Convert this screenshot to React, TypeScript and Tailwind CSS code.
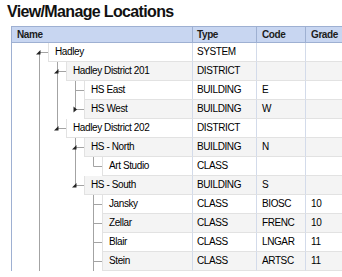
import React from 'react';

type Row = {
  name: string;
  type: string;
  code: string;
  grade: string;
  level: number;
  // full-height guide lines for ancestor levels
  anc: boolean[];
  // own guide line: full = has next sibling, half = last child, lower = root
  self: 'full' | 'half' | 'lower';
  exp: 'open' | 'closed' | null;
};

const rows: Row[] = [
  { name: 'Hadley', type: 'SYSTEM', code: '', grade: '', level: 0, anc: [], self: 'lower', exp: 'open' },
  { name: 'Hadley District 201', type: 'DISTRICT', code: '', grade: '', level: 1, anc: [true], self: 'full', exp: 'open' },
  { name: 'HS East', type: 'BUILDING', code: 'E', grade: '', level: 2, anc: [true, true], self: 'full', exp: null },
  { name: 'HS West', type: 'BUILDING', code: 'W', grade: '', level: 2, anc: [true, true], self: 'half', exp: 'closed' },
  { name: 'Hadley District 202', type: 'DISTRICT', code: '', grade: '', level: 1, anc: [true], self: 'half', exp: 'open' },
  { name: 'HS - North', type: 'BUILDING', code: 'N', grade: '', level: 2, anc: [true, false], self: 'full', exp: 'open' },
  { name: 'Art Studio', type: 'CLASS', code: '', grade: '', level: 3, anc: [true, false, true], self: 'half', exp: null },
  { name: 'HS - South', type: 'BUILDING', code: 'S', grade: '', level: 2, anc: [true, false], self: 'half', exp: 'open' },
  { name: 'Jansky', type: 'CLASS', code: 'BIOSC', grade: '10', level: 3, anc: [true, false, false], self: 'full', exp: null },
  { name: 'Zellar', type: 'CLASS', code: 'FRENC', grade: '10', level: 3, anc: [true, false, false], self: 'full', exp: null },
  { name: 'Blair', type: 'CLASS', code: 'LNGAR', grade: '11', level: 3, anc: [true, false, false], self: 'full', exp: null },
  { name: 'Stein', type: 'CLASS', code: 'ARTSC', grade: '11', level: 3, anc: [true, false, false], self: 'full', exp: null },
];

const INDENT = 18;
const H = 19;
const LINE = '#a3a3a3';

// tree guides drawn left of the label cell
const Guides: React.FC<{ row: Row }> = ({ row }) => {
  const w = 36 + INDENT * row.level;
  const lx = (k: number) => 27.5 + INDENT * k;
  const x = lx(row.level);
  const mid = 9.5;
  return (
    <svg width={w} height={H} className="shrink-0 block">
      {row.anc.map((on, k) =>
        on ? <line key={k} x1={lx(k)} y1={0} x2={lx(k)} y2={H} stroke={LINE} strokeWidth={1} /> : null
      )}
      {row.self === 'full' && <line x1={x} y1={0} x2={x} y2={H} stroke={LINE} />}
      {row.self === 'half' && <line x1={x} y1={0} x2={x} y2={mid} stroke={LINE} />}
      {row.self === 'lower' && <line x1={x} y1={mid} x2={x} y2={H} stroke={LINE} />}
      <line x1={x} y1={mid} x2={w} y2={mid} stroke={LINE} />
      {row.exp === 'open' && (
        <polygon points={`${x + 1},7 ${x + 1},11.5 ${x - 3.5},11.5`} fill="#222" />
      )}
      {row.exp === 'closed' && (
        <polygon points={`${x - 2},6.5 ${x - 2},12.5 ${x + 1.5},9.5`} fill="#222" />
      )}
    </svg>
  );
};

export default function App() {
  return (
    <div className="w-[342px] h-[277px] overflow-hidden bg-white font-['Liberation_Sans',Arial,sans-serif] text-black">
      <h1 className="h-[26px] pl-[7px] pt-[2px] text-[16px] leading-[19px] tracking-[-0.65px] font-bold text-[#111]">
        View/Manage Locations
      </h1>
      <div className="ml-[11px] w-[360px] border-l border-[#9eb0d2]">
        {/* header */}
        <div className="flex h-[17px] bg-[#c8d6f1] border-y border-[#9eb0d2] text-[10px] tracking-[-0.4px] font-bold text-[#1c1c1c] leading-[15px]">
          <div className="w-[180px] pl-[5px]">Name</div>
          <div className="w-[64px] border-l border-[#9eb0d2] pl-[4px]">Type</div>
          <div className="w-[49px] border-l border-[#9eb0d2] pl-[5px]">Code</div>
          <div className="flex-1 border-l border-[#9eb0d2] pl-[5px]">Grade</div>
        </div>
        {rows.map((r, i) => {
          const bg = i % 2 === 1 ? 'bg-[#f4f4f4]' : 'bg-white';
          return (
            <div key={i} className="flex h-[19px] text-[10px] tracking-[-0.4px] leading-[18px]">
              <div className="flex w-[180px]">
                <Guides row={r} />
                <div className={`flex-1 border-l border-b border-[#e2e2e2] pl-[6px] ${bg}`}>{r.name}</div>
              </div>
              <div className={`w-[64px] border-l border-b border-l-[#d3dbea] border-b-[#e2e2e2] pl-[4px] ${bg}`}>{r.type}</div>
              <div className={`w-[49px] border-l border-b border-l-[#d3dbea] border-b-[#e2e2e2] pl-[5px] ${bg}`}>{r.code}</div>
              <div className={`flex-1 border-l border-b border-l-[#d3dbea] border-b-[#e2e2e2] pl-[5px] ${bg}`}>{r.grade}</div>
            </div>
          );
        })}
      </div>
    </div>
  );
}
